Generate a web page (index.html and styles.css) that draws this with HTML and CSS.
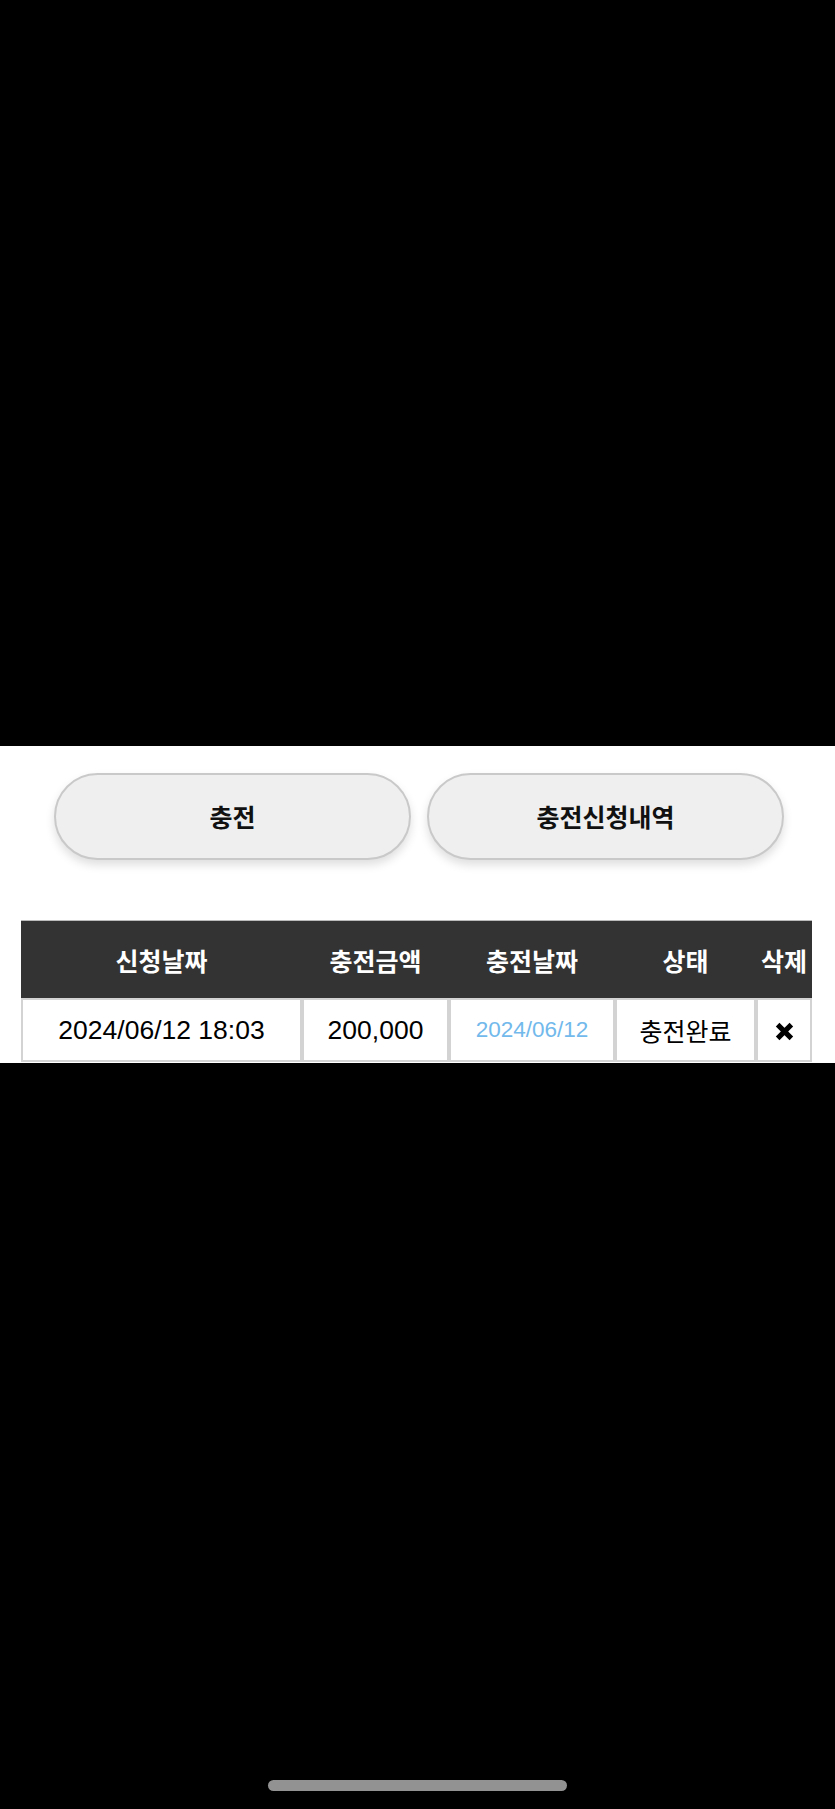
FILE: index.html
```html
<!DOCTYPE html>
<html lang="ko">
<head>
<meta charset="utf-8">
<title>충전신청내역</title>
<link rel="stylesheet" href="styles.css">
</head>
<body>
<div class="top-black"></div>
<section class="panel">
  <div class="buttons">
    <button class="pill">충전</button>
    <button class="pill">충전신청내역</button>
  </div>
  <table class="history">
    <colgroup>
      <col class="c1"><col class="c2"><col class="c3"><col class="c4"><col class="c5">
    </colgroup>
    <thead>
      <tr>
        <th>신청날짜</th>
        <th>충전금액</th>
        <th>충전날짜</th>
        <th>상태</th>
        <th>삭제</th>
      </tr>
    </thead>
    <tbody>
      <tr>
        <td class="num">2024/06/12 18:03</td>
        <td class="num">200,000</td>
        <td class="date">2024/06/12</td>
        <td class="status">충전완료</td>
        <td class="del"><svg class="xicon" viewBox="0 0 18 18" width="19" height="19"><path d="M2.5 2.5 L15.5 15.5 M15.5 2.5 L2.5 15.5" stroke="#000" stroke-width="4.8" fill="none"/></svg></td>
      </tr>
    </tbody>
  </table>
</section>
<div class="bottom-black">
  <div class="home-bar"></div>
</div>
</body>
</html>
```
FILE: styles.css
```css
html, body {
  margin: 0;
  padding: 0;
  background: #000;
}
body {
  width: 835px;
  min-height: 1809px;
  display: flex;
  flex-direction: column;
  font-family: "Liberation Sans", "Noto Sans CJK KR", sans-serif;
}
.top-black {
  height: 746px;
  flex: none;
}
.panel {
  background: #fff;
  padding: 27px 0 1px;
  flex: none;
}
.buttons {
  display: flex;
  gap: 16px;
  padding: 0 51px 0 54px;
}
.pill {
  flex: 1;
  height: 87px;
  border-radius: 44px;
  border: 2px solid #c9c9c9;
  background: #efefef;
  box-shadow: 0 5px 10px rgba(0, 0, 0, 0.13);
  font-family: "Noto Sans CJK KR", sans-serif;
  font-weight: 700;
  font-size: 25px;
  color: #111;
  padding: 0;
  line-height: 1;
}
.history {
  margin: 60px 0 0 21px;
  width: 791px;
  table-layout: fixed;
  border-collapse: separate;
  border-spacing: 0;
  border-top: 1px solid #bbb;
}
.c1 { width: 281px; }
.c2 { width: 147px; }
.c3 { width: 166px; }
.c4 { width: 141px; }
.c5 { width: 56px; }
.history th {
  background: #333;
  color: #fff;
  height: 77px;
  padding: 0;
  font-family: "Noto Sans CJK KR", sans-serif;
  font-weight: 700;
  font-size: 25px;
  text-align: center;
  vertical-align: middle;
}
.history td {
  border: 2px solid #d3d3d3;
  height: 60px;
  padding: 0;
  text-align: center;
  vertical-align: middle;
  color: #000;
}
.history td.num {
  font-size: 26.5px;
}
.history td.date {
  font-size: 22.5px;
  color: #72b9ec;
}
.history td.status {
  font-family: "Noto Sans CJK KR", sans-serif;
  font-size: 25px;
}
.xicon {
  display: block;
  margin: 3px auto 0;
}
.bottom-black {
  flex: 1;
  display: flex;
  flex-direction: column;
  justify-content: flex-end;
  align-items: center;
  padding-bottom: 18px;
}
.home-bar {
  width: 299px;
  height: 11px;
  border-radius: 6px;
  background: #929292;
}
```
